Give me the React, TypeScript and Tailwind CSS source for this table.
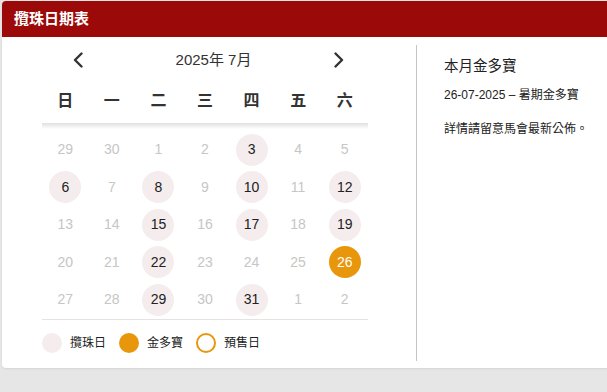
import React from "react";

const weekdays = ["日", "一", "二", "三", "四", "五", "六"];

type Day = { n: number; cur: boolean };

const weeks: Day[][] = [
  [29, 30, 1, 2, 3, 4, 5],
  [6, 7, 8, 9, 10, 11, 12],
  [13, 14, 15, 16, 17, 18, 19],
  [20, 21, 22, 23, 24, 25, 26],
  [27, 28, 29, 30, 31, 1, 2],
].map((row, i) =>
  row.map((n) => ({ n, cur: !((i === 0 && n > 20) || (i === 4 && n < 10)) }))
);

const drawDays = [3, 6, 8, 10, 12, 15, 17, 19, 22, 29, 31];
const jackpotDays = [26];

const font = { fontFamily: '"Liberation Sans", "Noto Sans CJK TC", sans-serif' };

const Chevron = ({ dir }: { dir: "left" | "right" }) => (
  <svg width="10" height="16" viewBox="0 0 10 16" fill="none">
    <polyline
      points={dir === "left" ? "8.5,1.5 2,8 8.5,14.5" : "1.5,1.5 8,8 1.5,14.5"}
      stroke="#333"
      strokeWidth="2.4"
      strokeLinecap="round"
      strokeLinejoin="round"
    />
  </svg>
);

function DayCell({ day }: { day: Day }) {
  const isDraw = day.cur && drawDays.includes(day.n);
  const isJackpot = day.cur && jackpotDays.includes(day.n);
  let cls = "text-[#c6c6c6]";
  if (isDraw) cls = "bg-[#f5eded] text-[#222]";
  if (isJackpot) cls = "bg-[#e8970c] text-white";
  return (
    <div className="flex h-[37.5px] items-center justify-center">
      <div className={`flex h-[32px] w-[32px] items-center justify-center rounded-full text-[14px] ${cls}`}>
        {day.n}
      </div>
    </div>
  );
}

export default function App() {
  return (
    <div className="h-[392px] w-full overflow-hidden bg-[#e6e6e6] pl-[2px] pt-[1px]" style={font}>
      <div className="h-[367px] w-[640px] overflow-hidden rounded-[4px] bg-white shadow-[0_1px_2px_rgba(0,0,0,0.08)]">
        <div className="flex h-[36px] items-center bg-[#9c0909] px-[12px] text-[15px] font-bold text-white">
          攬珠日期表
        </div>
        <div className="flex">
          <div className="w-[414px] pl-[40px]">
            <div className="w-[326px]">
              <div className="flex h-[38px] items-end pl-[31px] pr-[24px]">
                <div className="flex h-[30px] items-center">
                  <Chevron dir="left" />
                </div>
                <div className="flex h-[30px] flex-1 items-center justify-center pl-[10px] text-[15px] text-[#333]">
                  2025年 7月
                </div>
                <div className="flex h-[30px] items-center">
                  <Chevron dir="right" />
                </div>
              </div>
              <div className="grid h-[44px] grid-cols-7">
                {weekdays.map((w) => (
                  <div key={w} className="flex h-[44px] items-center justify-center pt-[8px] text-[16px] font-bold text-[#333]">
                    {w}
                  </div>
                ))}
              </div>
              <div className="mt-[4px] h-[6px] bg-gradient-to-b from-[#e2dede] to-white" />
              <div className="border-b border-[#e6e2e3] pt-[2px]">
                {weeks.map((row, i) => (
                  <div key={i} className="grid grid-cols-7">
                    {row.map((d, j) => (
                      <DayCell key={j} day={d} />
                    ))}
                  </div>
                ))}
              </div>
              <div className="flex items-center pt-[13px] text-[12px] text-[#222]">
                <span className="h-[20px] w-[20px] rounded-full bg-[#f5eded]" />
                <span className="ml-[8px] mr-[13px]">攬珠日</span>
                <span className="h-[20px] w-[20px] rounded-full bg-[#e8970c]" />
                <span className="ml-[8px] mr-[13px]">金多寶</span>
                <span className="h-[20px] w-[20px] rounded-full border-2 border-[#e8970c]" />
                <span className="ml-[8px]">預售日</span>
              </div>
            </div>
          </div>
          <div className="mt-[8px] h-[316px] border-l border-[#c4c4c4] pl-[27px] pt-[11px] text-[#222]">
            <div className="text-[14.5px] leading-[20px]">本月金多寶</div>
            <div className="mt-[11px] text-[12px] leading-[16px]">26-07-2025 – 暑期金多寶</div>
            <div className="mt-[18px] text-[12px] leading-[16px]">詳情請留意馬會最新公佈。</div>
          </div>
        </div>
      </div>
    </div>
  );
}
